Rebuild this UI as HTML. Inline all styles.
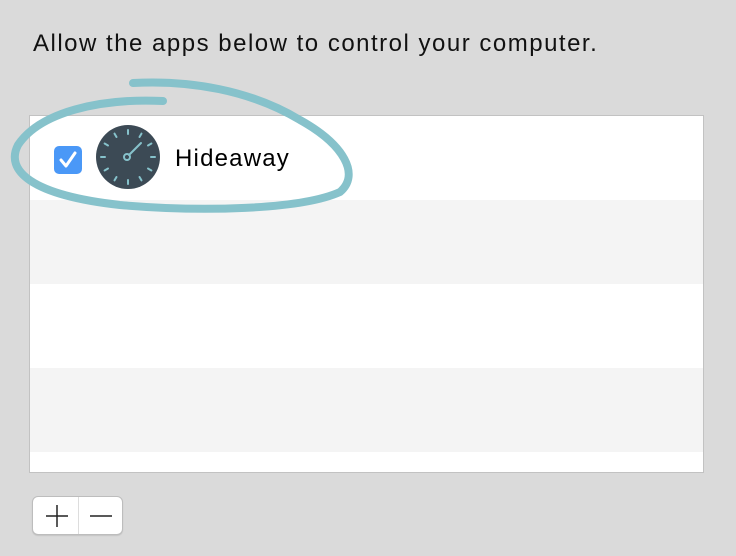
<!DOCTYPE html>
<html><head><style>
body{margin:0;width:736px;height:556px;background:#dadada;font-family:"Liberation Sans",sans-serif;position:relative;overflow:hidden}
.t{position:absolute;left:33px;top:30px;font-size:24px;letter-spacing:1.5px;color:#111}
.box{position:absolute;left:29px;top:115px;width:673px;height:356px;border:1px solid #c2c2c2;background:#fff}
.r{position:absolute;left:0;width:673px;height:84px}
.g{background:#f4f4f4}
.btn{position:absolute;left:32px;top:496px;width:89px;height:37px;background:#fff;border:1px solid #bdbdbd;border-radius:6px;box-shadow:0 1px 1px rgba(0,0,0,.1)}
.div{position:absolute;left:45px;top:0;width:1px;height:37px;background:#ddd}
</style></head><body>
<div class="t">Allow the apps below to control your computer.</div>
<div class="box">
<div class="r g" style="top:84px"></div>
<div class="r g" style="top:252px"></div>
<div style="position:absolute;left:24px;top:30px;width:28px;height:28px;background:#4a98f7;border-radius:5px"></div>
<div style="position:absolute;left:145px;top:29px;font-size:24px;letter-spacing:1.2px;color:#000">Hideaway</div>
</div>
<svg style="position:absolute;left:0;top:0" width="736" height="556">
<path d="M61 160 l5 6 l9 -13" stroke="#fff" stroke-width="3" fill="none" stroke-linecap="round" stroke-linejoin="round"/>
<circle cx="128" cy="157" r="32" fill="#3c4a55"/>
<g stroke="#86c2cb" stroke-width="2" stroke-linecap="round">
<line x1="128" y1="130" x2="128" y2="134"/><line x1="128" y1="180" x2="128" y2="184"/>
<line x1="101" y1="157" x2="105" y2="157"/><line x1="151" y1="157" x2="155" y2="157"/>
<line x1="114.5" y1="133.6" x2="116.5" y2="137"/><line x1="141.5" y1="133.6" x2="139.5" y2="137"/>
<line x1="104.6" y1="143.5" x2="108" y2="145.5"/><line x1="151.4" y1="143.5" x2="148" y2="145.5"/>
<line x1="104.6" y1="170.5" x2="108" y2="168.5"/><line x1="151.4" y1="170.5" x2="148" y2="168.5"/>
<line x1="114.5" y1="180.4" x2="116.5" y2="177"/><line x1="141.5" y1="180.4" x2="139.5" y2="177"/>
<line x1="129" y1="155" x2="141" y2="143"/>
</g>
<circle cx="127" cy="157" r="3" fill="none" stroke="#86c2cb" stroke-width="2"/>
<path d="M163 101 C100 98 40 112 18 145 C5 170 30 195 120 205 C200 212 300 210 340 192 C360 175 345 145 300 120 C250 90 190 80 133 83" fill="none" stroke="#86c2cb" stroke-width="8" stroke-linecap="round"/>
</svg>
<div class="btn"><div class="div"></div>
<svg width="89" height="37" style="position:absolute;left:0;top:0"><g stroke="#222" stroke-width="1.5"><line x1="13" y1="19" x2="35" y2="19"/><line x1="24" y1="8" x2="24" y2="30"/><line x1="57" y1="19" x2="79" y2="19"/></g></svg>
</div>
</body></html>
